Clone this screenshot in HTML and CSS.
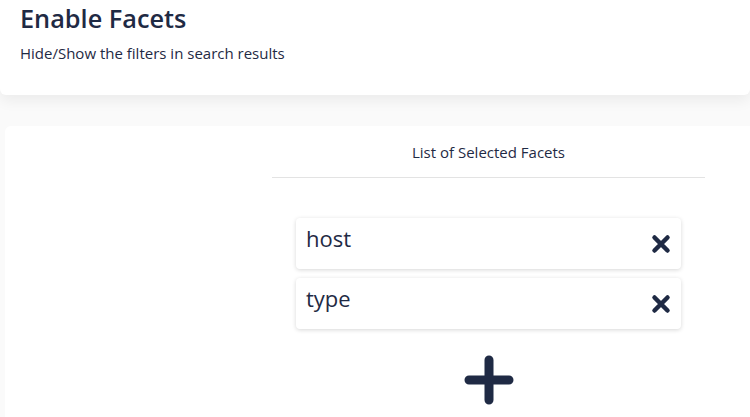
FILE: index.html
```html
<!DOCTYPE html>
<html>
<head>
<meta charset="utf-8">
<link rel="stylesheet" href="styles.css">
</head>
<body>
<header class="header">
  <h1 class="title">Enable Facets</h1>
  <p class="subtitle">Hide/Show the filters in search results</p>
</header>
<main class="card">
  <div class="side"></div>
  <section class="column">
    <div class="column-title">List of Selected Facets</div>
    <ul class="facets">
      <li class="facet"><span class="facet-name">host</span>
        <svg class="remove" viewBox="0 0 20 20" width="20" height="20"><path d="M3.5 3.5 L16.5 16.5 M16.5 3.5 L3.5 16.5" stroke="#1f2a44" stroke-width="4.5" stroke-linecap="round" fill="none"/></svg>
      </li>
      <li class="facet"><span class="facet-name">type</span>
        <svg class="remove" viewBox="0 0 20 20" width="20" height="20"><path d="M3.5 3.5 L16.5 16.5 M16.5 3.5 L3.5 16.5" stroke="#1f2a44" stroke-width="4.5" stroke-linecap="round" fill="none"/></svg>
      </li>
    </ul>
    <div class="add">
      <svg viewBox="0 0 50 50" width="50" height="50"><path d="M25 5 V45 M5 25 H45" stroke="#1f2a44" stroke-width="9" stroke-linecap="round" fill="none"/></svg>
    </div>
  </section>
</main>
</body>
</html>
```
FILE: styles.css
```css
* { box-sizing: border-box; }
html, body { margin: 0; padding: 0; }
body {
  background: #fafafa;
  font-family: "Open Sans", "Noto Sans", sans-serif;
  color: #1f2a44;
  height: 417px;
  overflow: hidden;
}
.header {
  background: #fff;
  height: 95px;
  padding: 1px 20px 0;
  border-radius: 0 0 6px 6px;
  box-shadow: 0 6px 14px rgba(0, 0, 0, 0.06);
}
.title {
  margin: 0;
  font-size: 25.3px;
  font-weight: 600;
  line-height: 35px;
}
.subtitle {
  margin: 7px 0 0;
  font-size: 15px;
  line-height: 21px;
}
.card {
  margin: 31px 0 0 5px;
  background: #fff;
  border-radius: 6px 0 0 0;
  height: 300px;
  display: flex;
}
.side { width: 267px; flex: none; }
.column { width: 433px; flex: none; }
.column-title {
  text-align: center;
  font-size: 15px;
  line-height: 20px;
  padding: 16px 0 15px;
  border-bottom: 1px solid #e3e3e3;
}
.facets {
  list-style: none;
  margin: 40px 24px 0;
  padding: 0;
  display: flex;
  flex-direction: column;
  gap: 9px;
}
.facet {
  height: 51px;
  background: #fff;
  border-radius: 4px;
  box-shadow: 0 1px 4px rgba(0, 0, 0, 0.16);
  display: flex;
  justify-content: space-between;
  align-items: flex-start;
  padding: 6px 10px 0 10px;
}
.facet-name {
  font-size: 22px;
  line-height: 29px;
}
.remove { margin-top: 10px; }
.add {
  display: flex;
  justify-content: center;
  margin-top: 26px;
}
.add svg { display: block; }
```
